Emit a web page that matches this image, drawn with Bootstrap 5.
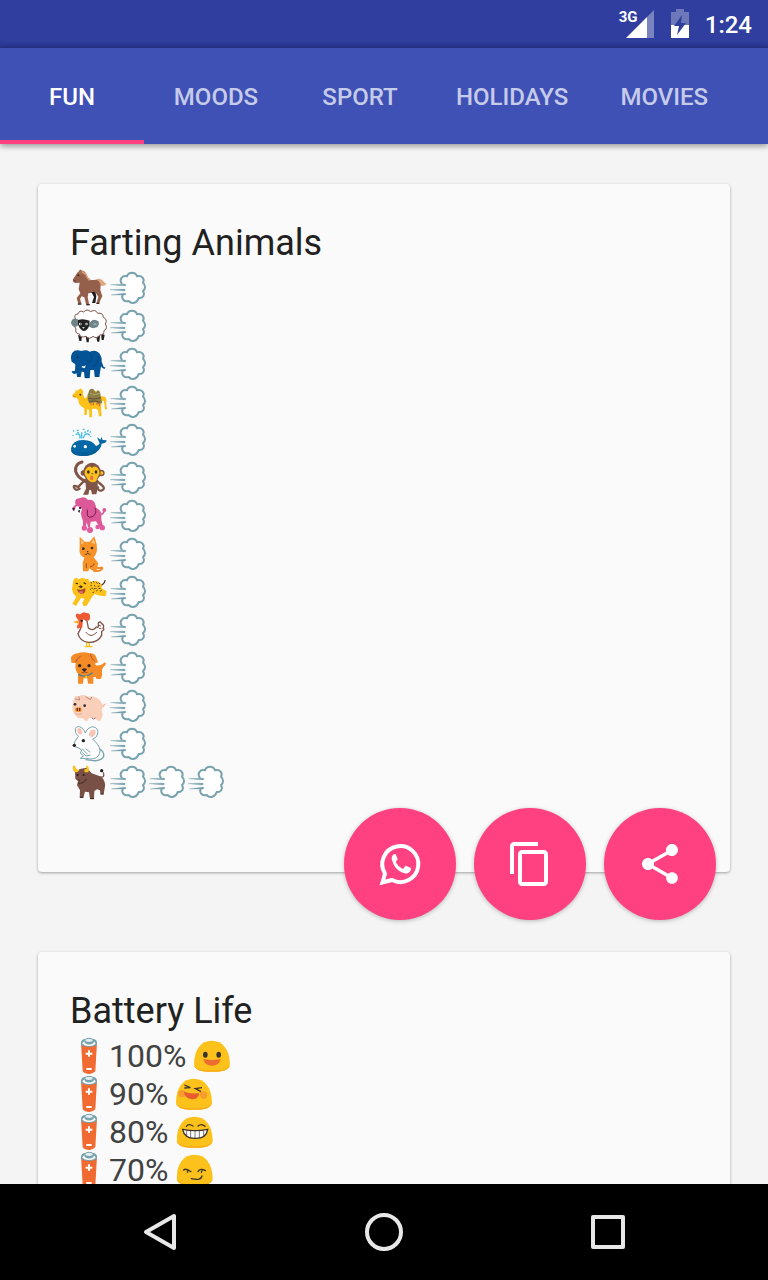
<!DOCTYPE html>
<html lang="en">
<head>
<meta charset="utf-8">
<meta name="viewport" content="width=device-width, initial-scale=1">
<title>Emoji stories</title>
<link href="https://cdn.jsdelivr.net/npm/bootstrap@5.3.0/dist/css/bootstrap.min.css" rel="stylesheet">
<style>
  body { font-family: Roboto, sans-serif; background: #f4f4f4; color: #212121; }
  .status-bar { height: 48px; padding: 0 16px; gap: 15px; background: linear-gradient(#303f9f 40px, #27348a); color: #fff; font-size: 24px; font-weight: 500; line-height: 48px; }
  .status-bar time { padding-top: 2px; }
  .signal { width: 36px; height: 28px; }
  .signal-type { left: 0; top: 0; font-size: 15px; font-weight: 700; line-height: 15px; }
  .tab-strip { height: 96px; background: #3f51b5; box-shadow: 0 2px 6px rgba(0,0,0,.4); z-index: 1; }
  .tab-strip .nav-link { min-width: 144px; height: 96px; padding: 3px 24px 0; border-bottom: 4px solid transparent; color: #c5cbe9; font-size: 24px; font-weight: 500; line-height: 92px; text-align: center; }
  .tab-strip .nav-link.active { color: #fff; border-bottom-color: #ff4081; }
  .feed { padding: 40px 38px; gap: 80px; min-height: 0; }
  .story { border: 0; border-radius: 4px; background: #fafafa; box-shadow: 0 1px 3px rgba(0,0,0,.35); padding: 37px 32px 71px; }
  .story h2 { font-size: 36px; font-weight: 400; line-height: 44px; margin: 0 0 4px; color: #212121; }
  .story li { height: 38px; font-size: 32px; line-height: 38px; color: #424242; display: flex; white-space: pre; }
  .emo { width: 39px; height: 38px; flex: none; }
  .fabs { right: 14px; bottom: -48px; gap: 18px; }
  .fab { width: 112px; height: 112px; border: 0; background: #ff4081; box-shadow: 0 1px 4px rgba(0,0,0,.25); }
  .fab svg { width: 48px; height: 48px; }
  .soft-keys { height: 96px; background: #000; padding: 0 48px; z-index: 1; }
  .soft-keys svg { width: 48px; height: 48px; fill: none; stroke: #e8e8e8; stroke-width: 4; stroke-linejoin: round; }
</style>
</head>
<body>
<svg class="d-none" aria-hidden="true">
  <symbol id="puff" viewBox="135 9 117 114">
    <path d="M173 52C165 41 175 27 189 31C194 17 214 17 219 31C234 27 243 39 237 50C245 57 245 69 237 75C244 87 236 98 224 96C220 112 203 115 194 105C182 109 171 99 176 87" fill="#fff" stroke="#78a2ad" stroke-width="6" stroke-linecap="round" stroke-linejoin="round"/>
    <path d="M140 56L184 54Q187 57 184 60ZM138 71L182 69Q186 72 182 75ZM142 87L184 81Q188 84 184 87Z" fill="#78a2ad" stroke="#78a2ad" stroke-width="1"/>
  </symbol>
  <symbol id="horse" viewBox="18 9 117 114">
    <path d="M96 42C113 31 117 50 127 53Q124 61 113 59L102 62Z" fill="#dda580"/>
    <path d="M47 16L50 10 54 17 66 31 73 43 98 41Q113 48 109 72L115 91 109 103 105 113 97 113 103 92 94 79 73 82 71 94 76 118H67L61 94 53 91 48 99 52 112 43 113 38 96 49 82 44 70 47 50 34 51Q25 50 27 40L41 19Z" fill="#945f4b"/>
    <path d="M82 78L94 78 97 91 94 111H84L90 93Z" fill="#1d1d1d"/>
    <path d="M45 13Q66 10 71 35L81 40 69 42 59 26 43 23Z" fill="#a56c50"/>
    <path d="M42 112H52V116H41ZM68 114H77V118H67ZM98 110H106V114H97Z" fill="#352725"/>
    <path d="M54 17L66 25 73 39" stroke="#dda580" stroke-width="4" fill="none"/>
    <circle cx="43" cy="28" r="2.5" fill="#111"/><path d="M28 42L36 45" stroke="#5c3930" stroke-width="2"/>
  </symbol>
  <symbol id="sheep" viewBox="18 123 117 114">
    <path d="M42 207L54 210 52 225H46ZM65 210H76L74 229H68ZM96 210H108L106 227H100ZM111 201L122 207 119 222H113Z" fill="#222"/>
    <path d="M34 158Q28 145 42 144Q46 131 59 138Q69 127 80 137Q94 128 101 142Q117 139 118 154Q132 160 124 174Q132 187 120 194Q120 208 107 207Q98 220 87 211Q75 222 66 211Q49 217 46 204Q32 202 36 189Q27 181 34 169Z" fill="#fff" stroke="#805349" stroke-width="3"/>
    <path d="M42 160Q24 151 21 171Q28 190 43 178ZM76 172Q87 154 103 166Q108 176 99 184Q83 190 74 181Z" fill="#6f8286"/>
    <path d="M42 162Q57 156 77 164L75 181Q70 195 58 195Q47 191 42 175Z" fill="#222"/>
    <path d="M90 171Q98 169 99 176Q93 180 87 176Z" fill="#8da7a9"/>
    <circle cx="49" cy="174" r="4" fill="#fff"/><circle cx="67" cy="174" r="4" fill="#fff"/><circle cx="50" cy="174" r="2"/><circle cx="66" cy="174" r="2"/><path d="M54 184H63L58 188Z" fill="#fff"/>
  </symbol>
  <symbol id="elephant" viewBox="18 237 117 114">
    <path d="M25 260Q34 249 52 255Q68 250 77 257Q98 249 108 265Q114 274 113 287L119 303Q124 305 125 300L122 309Q115 309 111 301L106 332H92L90 312 79 312 77 336H62L60 318 53 317 50 332H39L38 322Q25 328 23 316L33 314 34 295 23 287Q18 271 25 260Z" fill="#045396"/>
    <path d="M76 259Q89 272 76 289L64 281M101 272Q106 291 88 302" fill="none" stroke="#04457e" stroke-width="3"/>
    <circle cx="40" cy="274" r="3" fill="#012d55"/><path d="M54 299Q61 303 66 297L62 307 53 304Z" fill="#fff"/><path d="M40 331H50M64 335H76M93 331H106" stroke="#033c6e" stroke-width="3"/>
  </symbol>
  <symbol id="camel" viewBox="18 9 117 114">
    <path d="M39 32L50 25 58 34 57 43 62 55 67 53 72 43Q82 31 97 33L109 49Q125 47 127 57V77L130 86 123 89 120 64 114 62 111 80 113 109H105L102 90 94 86 84 87 84 112H76L75 90 70 88 68 105H61L61 85Q43 76 43 60L38 54 27 52Q22 45 29 41L35 35 33 29Z" fill="#fcc21b"/>
    <path d="M71 45L76 30Q84 23 90 29L95 38 101 31Q109 30 110 50L115 68 104 72 96 67 76 70 71 60Z" fill="#8d7e45"/>
    <path d="M72 55Q90 60 111 53M75 64L95 63 108 67" stroke="#634c38" stroke-width="3" fill="none"/><path d="M81 69V76M88 68V76M99 68V75M106 71V79" stroke="#ca5a32" stroke-width="3"/><path d="M78 40Q90 48 107 40" stroke="#acaa67" stroke-width="3" fill="none"/>
    <circle cx="49" cy="44" r="3" fill="#39342e"/><path d="M27 48L35 50" stroke="#b47719" stroke-width="2"/>
  </symbol>
  <symbol id="whale" viewBox="18 123 117 114">
    <path d="M21 206Q25 180 57 180Q86 180 96 198Q104 196 107 190L99 172 110 179 112 170 116 180 128 181Q126 191 113 191Q110 214 83 224Q61 231 35 225Q21 220 21 206Z" fill="#0468a4"/>
    <path d="M22 211Q48 221 83 213Q101 208 103 200Q100 217 82 224Q61 231 35 225Q22 220 22 211Z" fill="#045e98"/>
    <circle cx="32" cy="199" r="4" fill="#fff"/><circle cx="64" cy="200" r="5" fill="#fff"/>
    <path d="M48 174V168Q45 159 36 163M53 174V158M58 174L61 166Q69 157 76 165" fill="none" stroke="#40c0e7" stroke-width="4" stroke-linecap="round"/>
    <path d="M28 151L30 155M38 151H44M56 148H62M69 154L74 151M27 165V168M40 156L45 159M61 157L66 156M78 154L80 158M80 168V171" stroke="#40c0e7" stroke-width="4"/>
  </symbol>
  <symbol id="monkey" viewBox="18 237 117 114">
    <path d="M64 304Q40 292 35 274Q32 252 54 246" fill="none" stroke="#805548" stroke-width="9" stroke-linecap="round"/>
    <path d="M64 299L42 321Q24 313 32 326Q37 333 47 326M94 299L113 315Q127 326 112 332Q101 333 102 322" fill="none" stroke="#805548" stroke-width="7" stroke-linecap="round"/>
    <path d="M64 298H101V326L97 343H84L81 330H76L73 344H57L66 326Z" fill="#805548"/>
    <ellipse cx="57" cy="279" rx="7" ry="8" fill="#805548"/><ellipse cx="111" cy="279" rx="11" ry="10" fill="#805548"/><ellipse cx="112" cy="279" rx="6" ry="5" fill="#fcc21b"/>
    <ellipse cx="84" cy="276" rx="26" ry="28" fill="#805548"/>
    <path d="M66 267Q76 254 84 264Q94 254 103 267Q110 277 103 288L96 304Q84 311 73 301L64 287Q59 276 66 267Z" fill="#fcc21b"/>
    <ellipse cx="73" cy="276" rx="4" ry="5" fill="#332c27"/><ellipse cx="96" cy="276" rx="4" ry="5" fill="#332c27"/><path d="M82 281H88" stroke="#805548" stroke-width="3"/><ellipse cx="83" cy="294" rx="5" ry="7" fill="#ed6c4d"/>
  </symbol>
  <symbol id="poodle" viewBox="18 9 117 114">
    <path d="M108 62Q118 62 121 50" fill="none" stroke="#dc5898" stroke-width="5"/>
    <path d="M51 62L92 40Q110 46 112 60L112 78 117 97 106 98 96 82 80 83 78 99 72 99 68 85 65 99H57L57 82Z" fill="#dc5898"/>
    <path d="M35 32Q29 13 47 13Q63 5 72 18Q90 15 94 32Q102 49 91 65Q80 77 70 69L57 69 47 54 28 50Q21 42 30 36Z" fill="#dc5898"/>
    <path d="M70 47V65Q81 76 93 61Q99 47 91 41" fill="none" stroke="#6d224c" stroke-width="3"/>
    <path d="M36 37Q53 36 53 48Q52 61 40 63L31 51Z" fill="#fff"/><path d="M24 42L33 43 29 50ZM41 50L49 47 46 57Z" fill="#252127"/><circle cx="48" cy="42" r="3"/>
    <g fill="#e15b9e"><circle cx="121" cy="48" r="6"/><circle cx="61" cy="102" r="8"/><circle cx="78" cy="108" r="9"/><circle cx="101" cy="99" r="7"/><circle cx="115" cy="101" r="8"/></g>
  </symbol>
  <symbol id="cat" viewBox="18 123 117 114">
    <path d="M84 222H108Q119 218 113 226Q108 233 89 230" fill="none" stroke="#f48b28" stroke-width="6" stroke-linecap="round"/>
    <path d="M47 128L62 143H77L91 127 98 151Q102 179 89 190L103 208 98 229H83L76 223 73 232H57L56 207 61 191Q43 184 47 161Z" fill="#f79329"/>
    <path d="M51 137L60 147 52 151ZM89 136L94 150 82 146Z" fill="#fcc98b"/>
    <circle cx="58" cy="164" r="4" fill="#332c27"/><circle cx="84" cy="162" r="4" fill="#332c27"/><path d="M68 171H74L71 175Z" fill="#332c27"/><path d="M62 181Q70 184 71 176Q73 184 80 180" fill="none" stroke="#332c27" stroke-width="2"/><path d="M78 219Q90 217 91 208M67 208V222" fill="none" stroke="#98551d" stroke-width="3"/>
  </symbol>
  <symbol id="leopard" viewBox="18 237 117 114">
    <path d="M108 275Q120 272 123 260" fill="none" stroke="#45372a" stroke-width="4" stroke-linecap="round"/>
    <path d="M28 258Q35 247 44 256Q55 249 65 255Q76 251 75 263L97 260Q117 266 113 283L128 292 125 307 108 305 92 300 84 309 68 335 58 336 55 326 62 314 51 312 36 336 25 329 37 309 28 299 24 285Z" fill="#fcc21b"/>
    <path d="M35 268L42 269M59 266L66 270" stroke="#3f3428" stroke-width="4"/>
    <path d="M43 278L50 274 57 278 51 283Z" fill="#3f3428"/><path d="M39 285Q50 291 64 282Q66 302 50 299Q42 297 39 285Z" fill="#a94d35"/><path d="M44 294Q50 290 59 293L51 299Z" fill="#f36d71"/>
    <path d="M80 265L84 268M87 262L91 265M97 265L100 269M104 266L108 270M79 276L83 274M90 274L94 277M101 278L106 276M78 287L82 284M89 286L93 283M97 291L101 288M108 292L113 289M86 297L90 293M104 284L109 283M85 281V284M96 282V285" stroke="#3f3428" stroke-width="3"/>
  </symbol>
  <symbol id="hen" viewBox="18 9 117 114">
    <path d="M68 101V114M76 101V114M63 116H72M73 116H84" stroke="#fcc21b" stroke-width="4" stroke-linecap="round"/>
    <path d="M48 36L59 31 69 39 73 60Q86 71 97 57Q105 62 103 45Q109 38 113 47Q122 52 117 61Q124 64 113 70L113 82Q102 104 73 103Q48 101 42 77L50 62Z" fill="#fff" stroke="#805548" stroke-width="4" stroke-linejoin="round"/>
    <path d="M65 72Q80 93 99 72M104 51L111 54M105 61L112 62" fill="none" stroke="#805548" stroke-width="3"/>
    <path d="M43 36Q30 24 39 16Q47 21 51 17Q58 9 66 15Q79 13 78 27Q80 39 67 38L57 32 55 58Q47 67 44 53Z" fill="#ef5931"/>
    <path d="M27 43L41 37 44 47Z" fill="#fcae1b"/><circle cx="53" cy="38" r="3"/><path d="M42 49Q35 61 43 62Q49 58 48 50Z" fill="#ef5931"/>
  </symbol>
  <symbol id="dog" viewBox="18 123 117 114">
    <path d="M96 172Q112 174 123 163Q130 168 119 176L114 184V204L110 213H98L94 206 88 208 88 227H72L70 211 59 211 57 227H42L42 197Q32 188 35 165L22 164 21 148Q27 137 42 136Q59 130 76 136Q93 134 98 151L102 163 92 167Z" fill="#f58b27"/>
    <path d="M35 163Q39 150 50 144M79 139Q83 154 92 159" fill="none" stroke="#a65343" stroke-width="3"/>
    <circle cx="47" cy="173" r="5" fill="#332c27"/><circle cx="75" cy="173" r="5" fill="#332c27"/><path d="M53 184Q61 178 69 184L61 193Z" fill="#332c27"/><path d="M52 195Q61 190 71 194" fill="none" stroke="#643b2b" stroke-width="2"/><path d="M43 199Q62 212 86 194" fill="none" stroke="#4f8291" stroke-width="4"/><circle cx="66" cy="207" r="4" fill="#fcc21b"/>
  </symbol>
  <symbol id="pig" viewBox="18 237 117 114">
    <path d="M29 277L33 264 44 265Q59 257 72 266Q96 262 109 278L116 290 125 286 119 298 113 303 116 321 110 338 100 338 94 330 75 329 72 338 62 338 58 331 43 331 31 319Q20 301 29 277Z" fill="#f9cfb9"/>
    <path d="M44 265L47 276 33 273M65 266L79 275 84 266" fill="none" stroke="#9b6c67" stroke-width="2"/>
    <circle cx="33" cy="289" r="4" fill="#332c27"/><circle cx="62" cy="293" r="4" fill="#332c27"/><rect x="33" y="298" width="20" height="14" rx="6" fill="#f89531"/><path d="M40 300V309M47 300V309" stroke="#5c3328" stroke-width="4"/><path d="M34 317Q42 321 54 317M118 294L125 287" stroke="#d9988c" stroke-width="2" fill="none"/><path d="M83 329L88 333 95 330" fill="none" stroke="#9b6c67" stroke-width="3"/>
  </symbol>
  <symbol id="mouse" viewBox="18 9 117 114">
    <path d="M103 78Q123 90 119 104Q108 120 82 115L64 113" fill="none" stroke="#78a2ad" stroke-width="4"/>
    <path d="M43 43Q31 33 34 20Q40 9 53 17Q61 24 64 33Q70 17 86 14Q105 18 101 36Q98 48 86 51L100 66Q115 86 102 103Q88 115 65 109L49 109 59 101 49 94 53 84 44 78 31 73 32 60Z" fill="#fff" stroke="#78a2ad" stroke-width="3" stroke-linejoin="round"/>
    <ellipse cx="47" cy="28" rx="7" ry="10" transform="rotate(-25 47 28)" fill="#f8c6b8"/><ellipse cx="85" cy="34" rx="9" ry="12" transform="rotate(30 85 34)" fill="#f8c6b8"/><circle cx="58" cy="56" r="5" fill="#222"/><circle cx="31" cy="70" r="5" fill="#222"/><path d="M54 80L71 97M65 80L79 91M55 91L66 102 80 99" fill="none" stroke="#78a2ad" stroke-width="3"/>
  </symbol>
  <symbol id="ox" viewBox="18 123 117 114">
    <path d="M109 165Q123 168 118 151" fill="none" stroke="#735046" stroke-width="4"/><circle cx="113" cy="146" r="5" fill="#26201f"/>
    <path d="M33 151L48 141 68 137 83 154 112 164Q125 177 123 193L119 217H109L108 205 99 202 91 207 90 231H78L75 211 63 209 58 227H47L48 205 39 189 42 178 34 170Z" fill="#795045"/>
    <path d="M40 151Q23 151 27 131L33 131Q34 142 46 145ZM61 142L68 141 66 131 72 132Q78 144 72 151L62 151Z" fill="#fcc21b"/>
    <circle cx="41" cy="159" r="3" fill="#211c1c"/><circle cx="59" cy="159" r="3" fill="#211c1c"/><path d="M42 183Q59 187 67 170M43 173L47 176" fill="none" stroke="#3d2926" stroke-width="3"/><path d="M48 226H58M79 230H90M110 216H119" stroke="#352725" stroke-width="3"/>
  </symbol>
  <symbol id="cell" viewBox="18 15 117 114">
    <path d="M51 31H99L94 118Q85 127 75 126Q62 127 56 118Z" fill="#f06a32"/>
    <path d="M51 32Q51 21 65 20Q75 14 86 20Q99 21 99 32V39Q75 51 51 39Z" fill="#78a2ad"/><ellipse cx="75" cy="34" rx="19" ry="8" fill="#fff"/><path d="M62 24Q75 13 89 24V33Q75 42 62 33Z" fill="#78a2ad"/><ellipse cx="75" cy="25" rx="11" ry="5" fill="#e4edf0"/>
    <path d="M75 55V74M65 65H85M67 111H83" stroke="#fff" stroke-width="6"/>
  </symbol>
  <symbol id="head" viewBox="390 15 117 114">
    <path d="M390 95C391 52 411 26 443 26C477 26 496 52 498 95C498 114 477 119 444 119C411 119 390 114 390 95Z" fill="#fcc21b"/><path d="M390 95C391 110 411 115 444 115C477 115 497 110 498 95C498 114 477 119 444 119C411 119 390 114 390 95Z" fill="#faaa17"/>
  </symbol>
  <symbol id="smile" viewBox="390 15 117 114"><use href="#head" x="390" y="15" width="117" height="114"/><ellipse cx="424" cy="68" rx="7" ry="9" fill="#3b332d"/><ellipse cx="464" cy="68" rx="7" ry="9" fill="#3b332d"/><path d="M418 81Q444 87 470 81Q466 101 444 101Q422 101 418 81Z" fill="#ed6c30"/></symbol>
  <symbol id="laugh" viewBox="390 15 117 114"><use href="#head" x="390" y="15" width="117" height="114"/><circle cx="408" cy="71" r="11" fill="#f79b2c"/><circle cx="473" cy="75" r="11" fill="#f79b2c"/><path d="M415 45L433 53 415 54M468 53L448 56 465 65" fill="none" stroke="#3b332d" stroke-width="4"/><path d="M414 65Q436 73 460 69Q457 89 437 88Q416 85 414 65Z" fill="#e95c2f"/></symbol>
  <symbol id="grin" viewBox="388 15 117 114"><use href="#head" x="390" y="15" width="117" height="114"/><path d="M419 55Q426 45 439 54M454 54Q465 45 475 55" fill="none" stroke="#3b332d" stroke-width="4" stroke-linecap="round"/><path d="M408 64Q445 72 483 64Q479 92 445 91Q413 91 408 64Z" fill="#fff" stroke="#3b332d" stroke-width="4"/><path d="M420 67V84M432 69V90M445 69V91M458 69V90M471 67V84" stroke="#3b332d" stroke-width="2"/></symbol>
  <symbol id="smirk" viewBox="388 15 117 114"><use href="#head" x="390" y="15" width="117" height="114"/><path d="M411 72Q418 66 433 77M424 73L422 79M454 77Q461 65 476 74M467 72L464 79M434 98Q463 105 466 90" fill="none" stroke="#3b332d" stroke-width="4" stroke-linecap="round"/></symbol>
</svg>

<div class="d-flex flex-column vh-100 overflow-hidden">
  <header class="status-bar d-flex justify-content-end align-items-center flex-shrink-0">
    <div class="signal position-relative">
      <svg class="d-block" width="36" height="28" viewBox="0 0 36 28" aria-hidden="true"><path d="M28 7L35 0V28H28Z" fill="#7983bf"/><path d="M7 28L28 7V28Z" fill="#fff"/></svg>
      <span class="signal-type position-absolute">3G</span>
    </div>
    <svg width="20" height="30" viewBox="0 0 20 30" aria-hidden="true"><path d="M1 3H6V0H14V3H19V16H1Z" fill="#6d78b9"/><path d="M1 16H19V29H1Z" fill="#fff"/><path d="M12 6L4 17H9L7 26 16 14H11Z" fill="#303f9f"/></svg>
    <time>1:24</time>
  </header>
  <nav class="tab-strip nav flex-nowrap flex-shrink-0 position-relative overflow-visible">
    <a class="nav-link active" href="#fun" aria-current="page">FUN</a>
    <a class="nav-link" href="#moods">MOODS</a>
    <a class="nav-link" href="#sport">SPORT</a>
    <a class="nav-link" href="#holidays">HOLIDAYS</a>
    <a class="nav-link" href="#movies">MOVIES</a>
  </nav>
  <main class="feed d-flex flex-column flex-grow-1 overflow-hidden" id="fun">
    <article class="story card flex-shrink-0">
      <h2>Farting Animals</h2>
      <ul class="list-unstyled mb-0">
        <li><svg class="emo"><use href="#horse"/></svg><svg class="emo"><use href="#puff"/></svg></li>
        <li><svg class="emo"><use href="#sheep"/></svg><svg class="emo"><use href="#puff"/></svg></li>
        <li><svg class="emo"><use href="#elephant"/></svg><svg class="emo"><use href="#puff"/></svg></li>
        <li><svg class="emo"><use href="#camel"/></svg><svg class="emo"><use href="#puff"/></svg></li>
        <li><svg class="emo"><use href="#whale"/></svg><svg class="emo"><use href="#puff"/></svg></li>
        <li><svg class="emo"><use href="#monkey"/></svg><svg class="emo"><use href="#puff"/></svg></li>
        <li><svg class="emo"><use href="#poodle"/></svg><svg class="emo"><use href="#puff"/></svg></li>
        <li><svg class="emo"><use href="#cat"/></svg><svg class="emo"><use href="#puff"/></svg></li>
        <li><svg class="emo"><use href="#leopard"/></svg><svg class="emo"><use href="#puff"/></svg></li>
        <li><svg class="emo"><use href="#hen"/></svg><svg class="emo"><use href="#puff"/></svg></li>
        <li><svg class="emo"><use href="#dog"/></svg><svg class="emo"><use href="#puff"/></svg></li>
        <li><svg class="emo"><use href="#pig"/></svg><svg class="emo"><use href="#puff"/></svg></li>
        <li><svg class="emo"><use href="#mouse"/></svg><svg class="emo"><use href="#puff"/></svg></li>
        <li><svg class="emo"><use href="#ox"/></svg><svg class="emo"><use href="#puff"/></svg><svg class="emo"><use href="#puff"/></svg><svg class="emo"><use href="#puff"/></svg></li>
      </ul>
      <div class="fabs d-flex position-absolute">
        <button type="button" class="fab btn rounded-circle d-flex align-items-center justify-content-center p-0" aria-label="Send with WhatsApp">
          <svg viewBox="-1 0 48 48" fill="none"><path d="M5.500 42.500L8 33.500A18 18 0 1 1 15 40Z" fill="none" stroke="#fff" stroke-width="4"/><path d="M18 14C16 14 14 17 15 20C17 28 23 33 29 33.500C32 33.500 34 31 34 28.500Q34 28 33 27.500L29.500 26Q28.500 25.500 28 26.500L26.500 28.500Q26 29 25 28.500Q21 26.500 19 22.500Q18.700 22 19 21.500L20.500 19.500Q20.800 19 20.500 18.500L19 15Q18.700 14 18 14Z" fill="#fff"/></svg>
        </button>
        <button type="button" class="fab btn rounded-circle d-flex align-items-center justify-content-center p-0" aria-label="Copy">
          <svg viewBox="0 0 24 24" fill="#fff"><path d="M16 1H4c-1.100 0-2 .9-2 2v14h2V3h12V1zm3 4H8c-1.100 0-2 .9-2 2v14c0 1.100.9 2 2 2h11c1.100 0 2-.9 2-2V7c0-1.100-.9-2-2-2zm0 16H8V7h11v14z"/></svg>
        </button>
        <button type="button" class="fab btn rounded-circle d-flex align-items-center justify-content-center p-0" aria-label="Share">
          <svg viewBox="0 0 24 24" fill="#fff"><path d="M18 16.080c-.76 0-1.440.3-1.960.77L8.910 12.700c.05-.23.09-.46.09-.7s-.04-.47-.09-.7l7.050-4.110c.54.5 1.250.81 2.040.81 1.660 0 3-1.340 3-3s-1.340-3-3-3-3 1.340-3 3c0 .24.04.47.09.7L8.040 9.810C7.500 9.310 6.790 9 6 9c-1.660 0-3 1.340-3 3s1.340 3 3 3c.79 0 1.500-.31 2.040-.81l7.120 4.160c-.05.21-.08.43-.08.65 0 1.610 1.310 2.920 2.920 2.920 1.610 0 2.920-1.310 2.920-2.920s-1.310-2.920-2.920-2.920z"/></svg>
        </button>
      </div>
    </article>
    <article class="story card flex-shrink-0">
      <h2>Battery Life</h2>
      <ul class="list-unstyled mb-0">
        <li><svg class="emo"><use href="#cell"/></svg><span>100% </span><svg class="emo"><use href="#smile"/></svg></li>
        <li><svg class="emo"><use href="#cell"/></svg><span>90% </span><svg class="emo"><use href="#laugh"/></svg></li>
        <li><svg class="emo"><use href="#cell"/></svg><span>80% </span><svg class="emo"><use href="#grin"/></svg></li>
        <li><svg class="emo"><use href="#cell"/></svg><span>70% </span><svg class="emo"><use href="#smirk"/></svg></li>
      </ul>
    </article>
  </main>
  <footer class="soft-keys d-flex flex-shrink-0 align-items-center">
    <button type="button" class="btn border-0 p-0 flex-fill" aria-label="Back"><svg viewBox="0 0 48 48"><path d="M10 24L38 8V40Z"/></svg></button>
    <button type="button" class="btn border-0 p-0 flex-fill" aria-label="Home"><svg viewBox="0 0 48 48"><circle cx="24" cy="24" r="17"/></svg></button>
    <button type="button" class="btn border-0 p-0 flex-fill" aria-label="Recent apps"><svg viewBox="0 0 48 48"><path d="M9 9H39V39H9Z"/></svg></button>
  </footer>
</div>
<script src="https://cdn.jsdelivr.net/npm/bootstrap@5.3.0/dist/js/bootstrap.bundle.min.js"></script>
</body>
</html>
